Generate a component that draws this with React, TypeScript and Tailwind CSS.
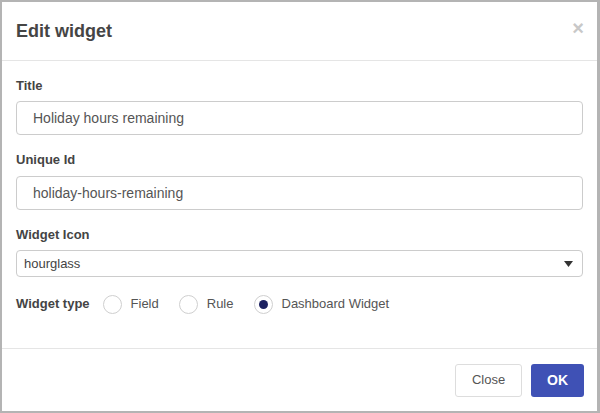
import React from "react";

function Radio({ checked, label }: { checked?: boolean; label: string }) {
  return (
    <label className="flex items-center">
      <span className="flex h-[19px] w-[19px] items-center justify-center rounded-full border border-[#cfcfcf] bg-white">
        {checked && <span className="h-[9px] w-[9px] rounded-full bg-[#1c2160]" />}
      </span>
      <span className="ml-[9px] text-[13px] leading-[18px] text-[#555]">{label}</span>
    </label>
  );
}

export default function App() {
  return (
    <div
      className="h-[413px] w-[600px] bg-white"
      style={{ fontFamily: '"Liberation Sans", Arial, sans-serif' }}
    >
      <div className="flex h-full w-full flex-col border-t-2 border-l-2 border-b-2 border-r-[3px] border-[#b4b4b4]">
        <div className="flex h-[59px] items-center justify-between border-b border-[#e5e5e5] pl-[14px] pr-[13px]">
          <h1 className="text-[18px] font-bold leading-[22px] text-[#454545]">Edit widget</h1>
          <span className="-mt-[6px] text-[20px] font-bold leading-none text-[#c8c8c8]">×</span>
        </div>
        <div className="flex h-[287px] flex-col px-[14px] pt-[16px]">
          <label className="mb-[6px] text-[13px] font-bold leading-[18px] text-[#444]">Title</label>
          <div className="flex h-[34px] items-center rounded-[4px] border border-[#cccccc] pl-[16px] text-[14px] text-[#555]">
            Holiday hours remaining
          </div>
          <label className="mb-[7px] mt-[16px] text-[13px] font-bold leading-[18px] text-[#444]">Unique Id</label>
          <div className="flex h-[34px] items-center rounded-[4px] border border-[#cccccc] pl-[16px] text-[14px] text-[#555]">
            holiday-hours-remaining
          </div>
          <label className="mb-[6px] mt-[16px] text-[13px] font-bold leading-[18px] text-[#444]">Widget Icon</label>
          <div className="flex h-[27px] items-center justify-between rounded-[4px] border border-[#cccccc] pl-[7px] pr-[9px] text-[13px] text-[#444]">
            <span>hourglass</span>
            <svg width="9" height="6" viewBox="0 0 9 6">
              <path d="M0 0 L9 0 L4.5 6 Z" fill="#333" />
            </svg>
          </div>
          <div className="mt-[17px] flex h-[20px] items-center">
            <span className="mr-[13px] text-[13px] font-bold leading-[18px] text-[#444]">Widget type</span>
            <div className="flex items-center gap-[20px]">
              <Radio label="Field" />
              <Radio label="Rule" />
              <Radio label="Dashboard Widget" checked />
            </div>
          </div>
        </div>
        <div className="flex flex-1 items-center justify-end gap-[9px] border-t border-[#e5e5e5] px-[13px]">
          <button className="h-[33px] w-[67px] rounded-[3px] border border-[#dddddd] bg-white text-[13px] text-[#555]">
            Close
          </button>
          <button className="h-[33px] w-[53px] rounded-[3px] bg-[#3f51b5] text-[14px] font-bold text-white">
            OK
          </button>
        </div>
      </div>
    </div>
  );
}
